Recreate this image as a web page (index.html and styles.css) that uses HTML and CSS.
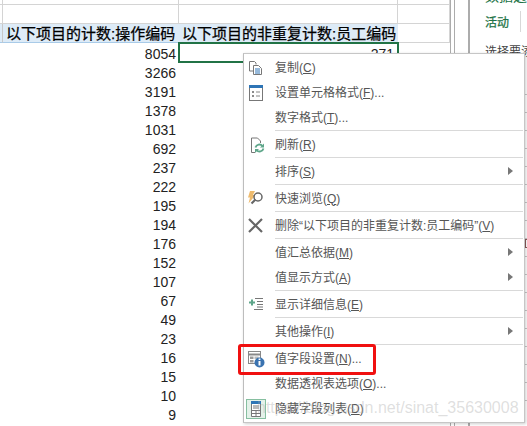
FILE: index.html
```html
<!DOCTYPE html>
<html lang="zh-CN">
<head>
  <meta charset="UTF-8">
  <title>数据透视表</title>
  <link rel="stylesheet" href="styles.css">
</head>
<body>

  <div class="window">
    <div class="sheet">
      <div class="row row-top"><div class="cell c-a"></div><div class="cell c-b"></div><div class="cell c-c"></div><div class="cell c-d"></div></div>
      <div class="row row-blank"><div class="cell c-a"></div><div class="cell c-b"></div><div class="cell c-c"></div><div class="cell c-d"></div></div>
      <div class="row row-head">
        <div class="cell c-a head-a"></div>
        <div class="cell c-b head">以下项目的计数:操作编码</div>
        <div class="cell c-c head">以下项目的非重复计数:员工编码</div>
        <div class="cell c-d"></div>
      </div>
      <div class="row"><div class="num c-ab">8054</div><div class="num c-c selected">271</div></div>
      <div class="row"><div class="num c-ab">3266</div></div>
      <div class="row"><div class="num c-ab">3191</div></div>
      <div class="row"><div class="num c-ab">1378</div></div>
      <div class="row"><div class="num c-ab">1031</div></div>
      <div class="row"><div class="num c-ab">692</div></div>
      <div class="row"><div class="num c-ab">237</div></div>
      <div class="row"><div class="num c-ab">222</div></div>
      <div class="row"><div class="num c-ab">195</div></div>
      <div class="row"><div class="num c-ab">194</div></div>
      <div class="row"><div class="num c-ab">176</div></div>
      <div class="row"><div class="num c-ab">152</div></div>
      <div class="row"><div class="num c-ab">107</div></div>
      <div class="row"><div class="num c-ab">67</div></div>
      <div class="row"><div class="num c-ab">49</div></div>
      <div class="row"><div class="num c-ab">23</div></div>
      <div class="row"><div class="num c-ab">16</div></div>
      <div class="row"><div class="num c-ab">15</div></div>
      <div class="row"><div class="num c-ab">10</div></div>
      <div class="row"><div class="num c-ab">9</div></div>
    </div>

    <div class="scrollbar"></div>

    <div class="panel">
      <div class="panel-title">数据透视表</div>
      <div class="panel-tabs"><span class="tab">活动</span><span class="tab-sep"></span></div>
      <div class="panel-hint">选择要添加到报表的字段</div>
      <div class="field-list">
        <div class="field"></div><div class="field"></div><div class="field"></div><div class="field"></div>
        <div class="field"></div><div class="field"></div><div class="field"></div><div class="field"></div>
        <div class="field"></div><div class="field"><span class="check"></span></div><div class="field"></div><div class="field"></div>
        <div class="field"></div><div class="field"></div><div class="field"></div><div class="field"></div>
        <div class="field"></div><div class="field"></div>
      </div>
    </div>

    <!-- Right click menu -->
    <div class="menu">
      <div class="item">
        <span class="icon"><svg width="18" height="18" viewBox="0 0 18 18"><path d="M2.500 2.500h5l1.500 1.500v1.500M2.500 2.500v9.500h3.500" fill="none" stroke="#777"/><path d="M6.500 6.500h5l3 3v6h-8z" fill="#fff" stroke="#777"/><path d="M8 10h5M8 12h5M8 14h5" stroke="#2e75b6"/></svg></span>
        <span class="label">复制(<u>C</u>)</span>
      </div>
      <div class="item">
        <span class="icon"><svg width="18" height="18" viewBox="0 0 18 18"><rect x="2.500" y="1.500" width="13" height="15" fill="#fff" stroke="#777"/><rect x="2" y="1" width="14" height="3" fill="#2e75b6"/><path d="M5 8h2M5 12h2" stroke="#666" stroke-width="1.500"/><path d="M9 8h4M9 12h4" stroke="#888"/></svg></span>
        <span class="label">设置单元格格式(<u>F</u>)...</span>
      </div>
      <div class="item">
        <span class="icon"></span>
        <span class="label">数字格式(<u>T</u>)...</span>
      </div>
      <div class="sep"></div>
      <div class="item">
        <span class="icon"><svg width="18" height="18" viewBox="0 0 18 18"><path d="M8 16.500h-3.500v-14.500h6l3 3v2" fill="none" stroke="#777"/><path d="M8.500 11.500a4 4 0 0 1 7-1.500M16.500 12.500a4 4 0 0 1-7 1.500" fill="none" stroke="#5ea68a" stroke-width="1.800"/><path d="M17 7.500v4h-4zM8 17v-4h4z" fill="#5ea68a"/></svg></span>
        <span class="label">刷新(<u>R</u>)</span>
      </div>
      <div class="sep"></div>
      <div class="item has-sub">
        <span class="icon"></span>
        <span class="label">排序(<u>S</u>)</span>
      </div>
      <div class="sep"></div>
      <div class="item">
        <span class="icon"><svg width="18" height="18" viewBox="0 0 18 18"><path d="M3 1h5l-2 4h2.500l-7 8.500 1.500-6h-2z" fill="#eebb6e"/><circle cx="11" cy="7" r="4" fill="#fff" stroke="#666" stroke-width="1.500"/><path d="M8.500 9.500l-4 4" stroke="#666" stroke-width="2.200"/></svg></span>
        <span class="label">快速浏览(<u>Q</u>)</span>
      </div>
      <div class="sep"></div>
      <div class="item">
        <span class="icon"><svg width="18" height="18" viewBox="0 0 18 18"><path d="M2 2l13 13M15 2l-13 13" stroke="#666" stroke-width="2.200"/></svg></span>
        <span class="label">删除“以下项目的非重复计数:员工编码”(<u>V</u>)</span>
      </div>
      <div class="sep"></div>
      <div class="item has-sub">
        <span class="icon"></span>
        <span class="label">值汇总依据(<u>M</u>)</span>
      </div>
      <div class="item has-sub">
        <span class="icon"></span>
        <span class="label">值显示方式(<u>A</u>)</span>
      </div>
      <div class="sep"></div>
      <div class="item">
        <span class="icon"><svg width="18" height="18" viewBox="0 0 18 18"><path d="M2 6.500h6M5 3.500v6" stroke="#5ea68a" stroke-width="2"/><path d="M8 2.500h8M10 5.500h6M10 8.500h6M10 11h6M7 13.500h9" stroke="#777"/></svg></span>
        <span class="label">显示详细信息(<u>E</u>)</span>
      </div>
      <div class="sep"></div>
      <div class="item has-sub">
        <span class="icon"></span>
        <span class="label">其他操作(<u>I</u>)</span>
      </div>
      <div class="sep"></div>
      <div class="item">
        <span class="icon"><svg width="18" height="18" viewBox="0 0 18 18"><rect x="1.500" y="1.500" width="12" height="12" fill="#fff" stroke="#888"/><path d="M1.500 4.500h12" stroke="#888" stroke-width="2"/><rect x="3" y="6.500" width="3.500" height="2.500" fill="#999"/><rect x="3" y="10" width="3.500" height="2.500" fill="#999"/><rect x="7.500" y="6.500" width="4" height="2.500" fill="#bbb"/><circle cx="12.500" cy="12.500" r="5" fill="#3a73b0"/><path d="M12.500 11v4.500" stroke="#fff" stroke-width="2"/><path d="M12.500 8.500v1.500" stroke="#fff" stroke-width="1.800"/></svg></span>
        <span class="label">值字段设置(<u>N</u>)...</span>
      </div>
      <div class="item">
        <span class="icon"></span>
        <span class="label">数据透视表选项(<u>O</u>)...</span>
      </div>
      <div class="item">
        <span class="icon icon-on"><svg width="18" height="18" viewBox="0 0 18 18"><path d="M4.500 1.500h9v15h-9z" fill="#fff" stroke="#777"/><rect x="4" y="1" width="10" height="3" fill="#2e75b6"/><path d="M6 6h6M6 8h6M4.500 10.500h9M4.500 13.500h9M9 10.500v6" stroke="#777"/></svg></span>
        <span class="label">隐藏字段列表(<u>D</u>)</span>
      </div>
      <div class="callout"></div>
    </div>

    <div class="watermark">https://blog.csdn.net/sinat_35630008</div>
  </div>

</body>
</html>
```

FILE: styles.css
```css
body {
  margin: 0;
  background: #fff;
  font-family: "Liberation Sans", "Noto Sans CJK SC", sans-serif;
}

.window {
  position: relative;
  display: flex;
  width: 527px;
  height: 426px;
  overflow: hidden;
  background: #fff;
}

/* Sheet */
.sheet {
  flex: none;
  width: 450px;
  border-right: 1px solid #acacac;
}

.row {
  display: flex;
  height: 19px;
}

.row-top {
  height: 5px;
}

.cell {
  box-sizing: border-box;
  border-right: 1px solid #d4d4d4;
  border-bottom: 1px solid #d4d4d4;
}

.c-a {
  width: 3px;
}

.c-b {
  width: 176px;
}

.c-ab {
  width: 179px;
}

.c-c {
  width: 219px;
}

.c-d {
  width: 52px;
}

.row-blank {
  height: 19px;
}

.row-top .cell,
.row-blank .cell {
  height: 100%;
}

.head {
  background: #ddebf7;
  border-right: none;
  border-bottom: 1px solid #a9cbe8;
  padding-left: 3px;
  font-size: 15px;
  line-height: 19px;
  color: #000;
  -webkit-text-stroke: 0.25px #000;
  white-space: nowrap;
  overflow: hidden;
}

.head-a {
  background: #ddebf7;
  border-right: 1px solid #c8c8c8;
  border-bottom: 1px solid #a9cbe8;
}

.num {
  box-sizing: border-box;
  padding-right: 3px;
  text-align: right;
  font-size: 14px;
  line-height: 23px;
  color: #222;
  height: 19px;
  overflow: hidden;
}

.selected {
  box-sizing: border-box;
  width: 221px;
  height: 21px;
  margin: -1px 0 0 -1px;
  padding-right: 3px;
  border: 2px solid #217346;
  line-height: 21px;
}

.scrollbar {
  flex: none;
  box-sizing: border-box;
  width: 16px;
  margin-left: 3px;
  border-left: 1px solid #acacac;
  border-right: 2px solid #acacac;
}

/* Field list pane */
.panel {
  flex: none;
  width: 57px;
  overflow: hidden;
  white-space: nowrap;
}

.panel-title {
  margin: -14px 0 0 15px;
  height: 20px;
  font-size: 14px;
  line-height: 20px;
  color: #217346;
}

.panel-tabs {
  display: flex;
  align-items: center;
  height: 21px;
  margin: 5px 0 0 15px;
}

.tab {
  width: 35px;
  font-size: 12px;
  color: #217346;
  -webkit-text-stroke: 0.25px #217346;
}

.tab-sep {
  width: 1px;
  height: 21px;
  background: #d8d8d8;
}

.panel-hint {
  margin: 12px 0 0 15px;
  font-size: 12px;
  line-height: 16px;
  color: #444;
}

.field-list {
  margin-top: 17px;
}

.field {
  height: 17px;
  border-bottom: 1px solid #c8c8c8;
}

.check {
  display: block;
  box-sizing: border-box;
  width: 8px;
  height: 9px;
  margin-left: 55px;
  border: 1px solid #8a5a5a;
}

/* Context menu */
.menu {
  position: absolute;
  left: 243px;
  top: 53px;
  box-sizing: border-box;
  width: 282px;
  height: 370px;
  padding: 1px 1px 0 0;
  background: #fff;
  border: 1px solid #c6c6c6;
  border-left-color: #bdbdbd;
  box-shadow: 1px 1px 3px rgba(0, 0, 0, 0.2);
}

.item {
  display: flex;
  align-items: center;
  height: 25px;
  font-size: 12px;
  color: #555;
  white-space: nowrap;
}

.icon {
  flex: none;
  display: flex;
  align-items: center;
  justify-content: center;
  box-sizing: border-box;
  width: 20px;
  height: 20px;
  margin: 0 9px 0 2px;
}

.icon-on {
  background: #e4f1e9;
  border: 1px solid #86bfa0;
}

.label {
  line-height: 16px;
}

.has-sub {
  position: relative;
}

.has-sub::after {
  content: "";
  position: absolute;
  right: 10px;
  top: 8px;
  border-left: 5px solid #777;
  border-top: 4px solid transparent;
  border-bottom: 4px solid transparent;
}

.sep {
  height: 1px;
  margin: 0 0 1px 31px;
  background: #d9d9d9;
}

/* Red highlight drawn on top of the screenshot */
.callout {
  position: absolute;
  left: -6px;
  top: 290px;
  box-sizing: border-box;
  width: 138px;
  height: 31px;
  border: 3px solid #f01010;
  border-radius: 3px;
}

.watermark {
  position: absolute;
  left: 257px;
  top: 399px;
  font-size: 16px;
  line-height: 18px;
  color: rgba(170, 170, 170, 0.38);
  white-space: nowrap;
}
```
